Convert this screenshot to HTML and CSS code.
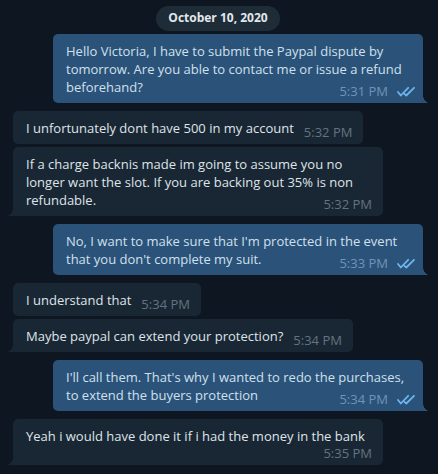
FILE: index.html
```html
<!DOCTYPE html>
<html lang="en">
<head>
  <meta charset="UTF-8">
  <meta name="viewport" content="width=device-width, initial-scale=1.0">
  <title>Chat</title>
  <link rel="stylesheet" href="styles.css">
</head>
<body>
  <svg class="sprite" aria-hidden="true">
    <symbol id="ticks" viewBox="0 0 18 12">
      <path d="M1 6 L3.8 9.5 L11.2 1.8 M7.4 7.8 L9.3 9.5 L17 1.8" fill="none" stroke="currentColor" stroke-width="1.8" stroke-linecap="round" stroke-linejoin="round"/>
    </symbol>
  </svg>

  <main class="chat">
    <div class="date">October 10, 2020</div>

    <div class="group out">
      <div class="message tail">
        Hello Victoria, I have to submit the Paypal dispute by tomorrow. Are you able to contact me or issue a refund beforehand?
        <span class="meta"><time>5:31 PM</time><svg class="ticks"><use href="#ticks"/></svg></span>
      </div>
    </div>

    <div class="group in">
      <div class="message">
        I unfortunately dont have 500 in my account
        <span class="meta"><time>5:32 PM</time></span>
      </div>
      <div class="message tail">
        If a charge backnis made im going to assume you no longer want the slot. If you are backing out 35% is non refundable.
        <span class="meta"><time>5:32 PM</time></span>
      </div>
    </div>

    <div class="group out">
      <div class="message tail">
        No, I want to make sure that I'm protected in the event that you don't complete my suit.
        <span class="meta"><time>5:33 PM</time><svg class="ticks"><use href="#ticks"/></svg></span>
      </div>
    </div>

    <div class="group in">
      <div class="message">
        I understand that
        <span class="meta"><time>5:34 PM</time></span>
      </div>
      <div class="message tail">
        Maybe paypal can extend your protection?
        <span class="meta"><time>5:34 PM</time></span>
      </div>
    </div>

    <div class="group out">
      <div class="message tail">
        I'll call them. That's why I wanted to redo the purchases, to extend the buyers protection
        <span class="meta"><time>5:34 PM</time><svg class="ticks"><use href="#ticks"/></svg></span>
      </div>
    </div>

    <div class="group in">
      <div class="message tail">
        Yeah i would have done it if i had the money in the bank
        <span class="meta below"><time>5:35 PM</time></span>
      </div>
    </div>
  </main>
</body>
</html>
```

FILE: styles.css
```css
* {
  box-sizing: border-box;
}
body {
  margin: 0;
  background: #0e1621;
  font-family: "Open Sans", "Noto Sans", sans-serif;
  font-size: 13px;
  line-height: 18px;
}
.sprite {
  display: none;
}
.chat {
  display: flex;
  flex-direction: column;
  gap: 8px;
  padding: 6px 15px 8px 13px;
}
.date {
  align-self: center;
  margin-bottom: -5px;
  padding: 3px 12px 4px;
  border-radius: 13px;
  background: #1e2c38;
  color: #e3e8ec;
  font-size: 12px;
  font-weight: 700;
}
.group {
  display: flex;
  flex-direction: column;
  align-items: flex-start;
  gap: 3px;
}
.group.out {
  align-items: flex-end;
}
.message {
  display: flow-root;
  position: relative;
  max-width: 370px;
  padding: 8px 11px 3px 13px;
  border-radius: 5px;
  background: #192734;
  color: #dfe4e8;
}
.out .message {
  padding-right: 13px;
  background: #2b5278;
  color: #cfe0ee;
}
.in .tail {
  border-bottom-left-radius: 0;
}
.out .tail {
  border-bottom-right-radius: 0;
}
/* little corner that sticks out of the last bubble in a group */
.tail::after {
  content: "";
  position: absolute;
  bottom: 0;
  width: 6px;
  height: 8px;
}
.in .tail::after {
  right: 100%;
  background: radial-gradient(ellipse 6px 8px at 0 0, transparent 95%, #192734 100%);
}
.out .tail::after {
  left: 100%;
  background: radial-gradient(ellipse 6px 8px at 100% 0, transparent 95%, #2b5278 100%);
}
.meta {
  float: right;
  display: flex;
  align-items: center;
  gap: 9px;
  margin: 5px 0 0 10px;
  color: #64737f;
  line-height: 17px;
}
.meta.below {
  margin-top: 0;
}
.out .meta {
  margin-right: -5px;
  color: #7094b8;
}
.ticks {
  width: 18px;
  height: 12px;
  color: #6db4ec;
}
```
